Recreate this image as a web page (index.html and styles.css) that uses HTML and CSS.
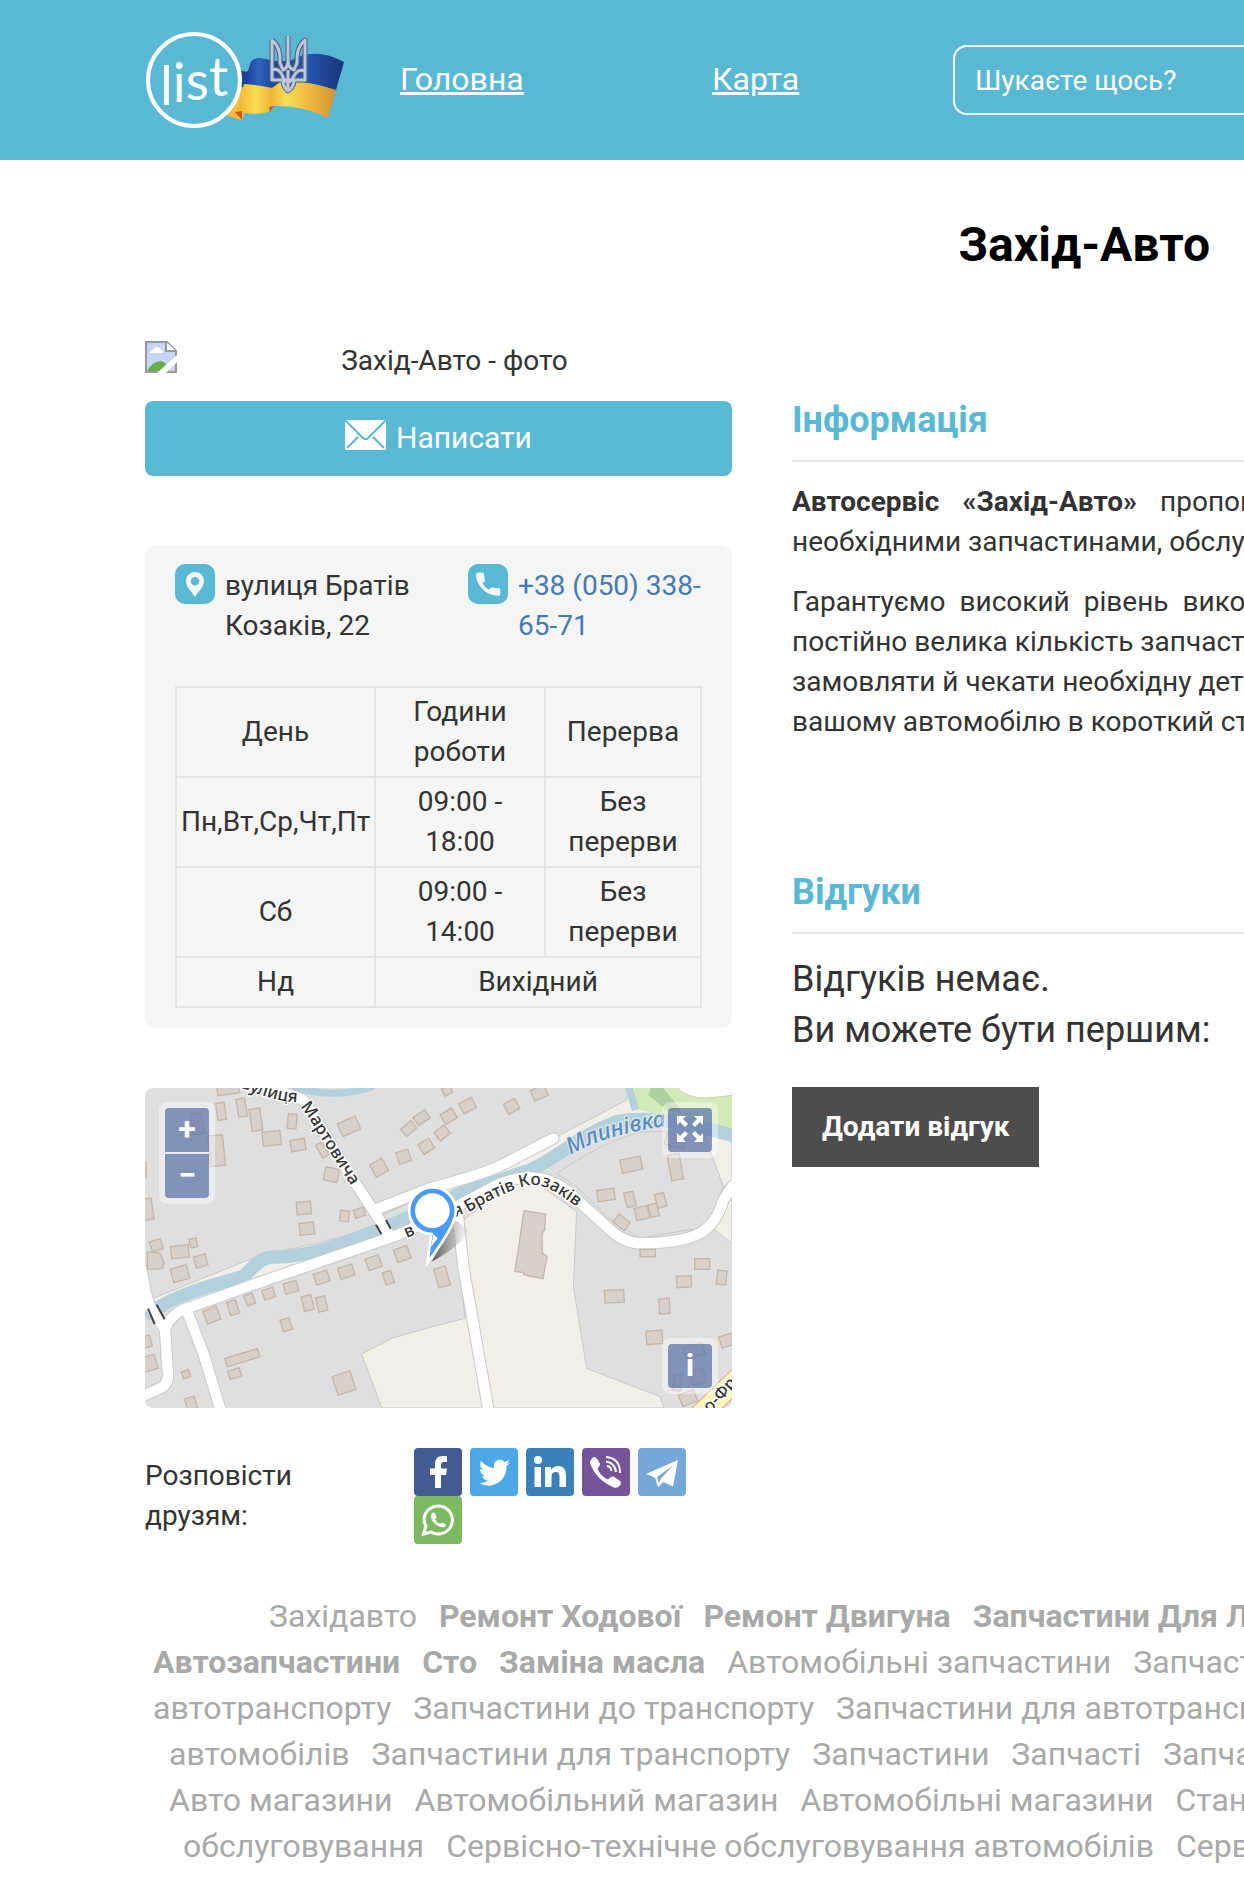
FILE: index.html
```html
<!DOCTYPE html>
<html lang="uk">
<head>
<meta charset="utf-8">
<meta name="viewport" content="width=device-width, initial-scale=1">
<title>Захід-Авто</title>
<link rel="stylesheet" href="styles.css">
</head>
<body>
<header class="header">
  <a class="logo" href="#" aria-label="list">
    <svg width="200" height="96" viewBox="0 0 200 96">
      <defs>
        <linearGradient id="blue" x1="0" x2="1"><stop offset="0" stop-color="#173f94"/><stop offset=".15" stop-color="#2f62bd"/><stop offset=".3" stop-color="#1b469c"/><stop offset=".6" stop-color="#2457b4"/><stop offset="1" stop-color="#1b3679"/></linearGradient>
        <linearGradient id="gold" x1="0" x2="1"><stop offset="0" stop-color="#f0b32c"/><stop offset=".2" stop-color="#fbdc52"/><stop offset=".35" stop-color="#eeb533"/><stop offset=".5" stop-color="#fade55"/><stop offset=".75" stop-color="#efb63c"/><stop offset="1" stop-color="#cf9233"/></linearGradient>
      </defs>
      <path fill="#f3bd38" d="M79 82L98 50 108 60 97 88Q90 87 79 82z"/>
      <path fill="#1d4291" d="M95 38Q101 41 105 38V56L96 55z"/>
      <path fill="url(#blue)" d="M105 32Q107 26 115 26 123 27 128 29H145Q170 14 199 30L191 58Q162 49 145 49L127 56Q113 53 99 53z"/>
      <path fill="url(#gold)" d="M99 52Q114 53 127 56L135 50Q161 48 191 58L183 86Q157 73 129 74 122 86 96 80L91 82z"/>
      <path fill="#d2531f" d="M90 80L97 79V88zM124 75L129 74 125 80z"/>
      <g fill="none" stroke-linejoin="round">
        <path stroke="#505e81" stroke-width="5" d="M127 8V48H160V8Q151 15 152 31L149 38Q143 36 143 29V4M127 8Q136 15 135 31L138 38Q143 36 143 29M127 38Q134 35 138 45 143 56 149 44 153 36 160 39M138 48Q138 55 143 59 149 55 149 48M143 38V59"/>
        <path stroke="#bcc7dc" stroke-width="3" d="M127 8V48H160V8Q151 15 152 31L149 38Q143 36 143 29V4M127 8Q136 15 135 31L138 38Q143 36 143 29M127 38Q134 35 138 45 143 56 149 44 153 36 160 39M138 48Q138 55 143 59 149 55 149 48M143 38V59"/>
      </g>
      <circle cx="49" cy="48" r="46" fill="#59b8d4" stroke="#fff" stroke-width="4"/>
      <text class="logo-text" x="15" y="73" dy="0 -3 -2 -4">list</text>
    </svg>
  </a>
  <nav class="nav"><a href="#">Головна</a><a href="#">Карта</a></nav>
  <input class="search" type="text" placeholder="Шукаєте щось?" aria-label="Пошук">
</header>

<main class="main">
  <h1 class="title">Захід-Авто</h1>
  <div class="columns">
    <div class="side">
      <div class="photo">
        <svg width="32" height="32" viewBox="0 0 32 32"><path fill="#c7d6f5" d="M1 1H22L31 10V31H1z"/><path fill="#fff" d="M5 12Q5 9 8 9 9 6 12 6 15 6 16 9 18 9 18 12z"/><path fill="#69ad46" d="M2 30Q8 20 16 20 22 21 24 30z"/><path fill="none" stroke="#999" stroke-width="2" d="M1 1H22L31 10V31H1z"/><path fill="#fff" stroke="#999" stroke-width="2" d="M21 1V10H31"/><path fill="#fff" d="M12 32L32 14V21L21 32z"/></svg>
        <span>Захід-Авто - фото</span>
      </div>
      <button class="write" type="button">
        <svg width="41" height="30" viewBox="0 0 41 30"><rect width="41" height="30" rx="2" fill="#fff"/><path d="M0 0L18 18Q20.500 20.500 23 18L41 0M2 28L13 17M39 28L28 17" fill="none" stroke="#59b8d4" stroke-width="2"/></svg>
        Написати
      </button>

      <section class="card">
        <div class="contacts">
          <div class="contact">
            <svg width="40" height="40" viewBox="0 0 40 40"><rect width="40" height="40" rx="10" fill="#59b8d4"/><path fill="#f5f5f5" fill-rule="evenodd" d="M20 8C15 8 11 12 11 17 11 23 17 28 20 33 23 28 29 23 29 17 29 12 25 8 20 8zM20 13A4 4 0 1 1 20 21.500 4 4 0 1 1 20 13z"/></svg>
            <span class="contact-text">вулиця Братів Козаків, 22</span>
          </div>
          <div class="contact">
            <svg width="40" height="40" viewBox="0 0 40 40"><rect width="40" height="40" rx="10" fill="#59b8d4"/><path fill="#f5f5f5" d="M10 8.500H14.500Q16 8.500 16 10 16 13 17 16 17.200 17 16.500 17.700L14.500 19.500Q17 23.500 20.800 25.800L23 23.700Q23.800 23 25 23.400 27.500 24.300 31 24.300 32.300 24.300 32.300 25.800V30Q32.300 31.800 30.500 31.800 20 31.500 14 24.500 8 18 8 10.500 8 8.500 10 8.500z"/></svg>
            <a class="contact-text" href="#">+38 (050) 338-65-71</a>
          </div>
        </div>
        <table class="hours">
          <colgroup><col class="col-day"><col class="col-time"><col></colgroup>
          <tr><th>День</th><th>Години роботи</th><th>Перерва</th></tr>
          <tr><td>Пн,Вт,Ср,Чт,Пт</td><td>09:00 - 18:00</td><td>Без перерви</td></tr>
          <tr><td>Сб</td><td>09:00 - 14:00</td><td>Без перерви</td></tr>
          <tr><td>Нд</td><td colspan="2">Вихідний</td></tr>
        </table>
      </section>

      <section class="map">
        <svg class="map-canvas" viewBox="15 24 1761 960" preserveAspectRatio="xMidYMid slice">
          <defs>
            <path id="st1" d="M300 22Q400 62 460 66 490 80 530 155L680 390"/>
            <path id="st2" d="M985 398Q1080 342 1150 320C1200 306 1230 316 1360 420"/>
            <path id="st3" d="M1292 224Q1400 160 1620 132"/>
            <path id="st4" d="M1710 1000L1830 870"/>
            <linearGradient id="shade"><stop offset="0" stop-color="#5c5650"/><stop offset="1" stop-color="#999" stop-opacity="0"/></linearGradient>
          </defs>
          <path fill="#dfdfdf" d="M15 24H1776V984H15z"/>
          <g fill="#f2efe9" stroke="#c9c9c9" stroke-width="3">
            <path d="M665 822L755 775 870 742 975 715 945 440 1150 280 1310 395 1300 620 1340 865 1560 950 1572 984H725z"/>
            <path d="M40 655Q200 590 350 530 540 490 720 440L790 450 850 420 550 540 140 680 50 700z"/>
            <path d="M728 405L800 370 900 350 1230 250 1460 145 1600 130 1690 170 1750 320 1776 310V24H1465L1460 60 1260 165z"/>
            <path d="M1718 445L1776 490V330z"/>
          </g>
          <path fill="#dfdfdf" stroke="#c9c9c9" stroke-width="3" d="M1250 280Q1380 190 1500 155H1690L1750 320 1700 440 1500 475 1400 410 1310 320z"/>
          <path fill="#d2eab5" d="M1470 24H1776V148L1490 88z"/>
          <path fill="#add19e" d="M1532 24H1570L1630 100 1580 90 1525 45z"/>
          <g fill="none" stroke="#b3d1dc">
            <path stroke-width="40" d="M15 705C120 640 200 620 310 590 370 530 370 530 440 530 570 515 700 455 800 415L960 340 1170 270C1270 225 1300 175 1430 125Q1560 100 1780 168"/>
            <path stroke-width="22" d="M460 18Q580 62 700 18M1466 20L1486 90"/>
          </g>
          <path fill="none" stroke="#c9c9c9" stroke-width="37" stroke-linecap="round" stroke-linejoin="round" d="M75 745Q95 700 140 685L350 610 540 545 760 470 850 430 950 380 1070 315Q1200 260 1290 340L1400 440Q1450 490 1500 490 1620 490 1680 460 1730 430 1750 360L1780 315M715 385L870 325Q1020 285 1080 258L1240 175M320 8Q450 40 490 60L640 300 745 460M5 570Q15 640 30 680L75 750 82 860Q90 900 70 920L5 950M140 690L190 820 245 1000M953 400L970 560 1047 1000"/>
          <path fill="none" stroke="#fff" stroke-width="31" stroke-linecap="round" stroke-linejoin="round" d="M75 745Q95 700 140 685L350 610 540 545 760 470 850 430 950 380 1070 315Q1200 260 1290 340L1400 440Q1450 490 1500 490 1620 490 1680 460 1730 430 1750 360L1780 315M715 385L870 325Q1020 285 1080 258L1240 175M320 8Q450 40 490 60L640 300 745 460M5 570Q15 640 30 680L75 750 82 860Q90 900 70 920L5 950M140 690L190 820 245 1000M953 400L970 560 1047 1000"/>
          <path fill="#fff" stroke="#c9c9c9" stroke-width="3" d="M1610 22Q1640 55 1700 54L1780 46V22z"/>
          <path stroke="#444" stroke-width="6" d="M24 686L44 732M50 674L74 718M708 434L724 462M738 420L752 446"/>
          <path stroke="#e8a08c" stroke-width="66" d="M1660 1024L1810 880"/>
          <path stroke="#f7f7ba" stroke-width="60" d="M1660 1024L1810 880"/>
          <g fill="#d9d0c9" stroke="#c6b6a9" stroke-width="4">
            <path d="M1152 392L1217 402 1214 450 1206 460 1207 520 1221 530 1209 596 1151 584 1152 578 1125 574z"/>
            <path d="M22 515L60 520 72 548 68 566 22 568z"/>
            <rect x="232" y="15" width="66" height="28" transform="rotate(-8 265 30)"/>
            <rect x="155" y="100" width="34" height="62" transform="rotate(-8 172 131)"/>
            <rect x="208" y="166" width="44" height="92" transform="rotate(-6 230 212)"/>
            <rect x="230" y="68" width="26" height="52" transform="rotate(-8 243 94)"/>
            <rect x="292" y="56" width="26" height="54" transform="rotate(-10 305 83)"/>
            <rect x="332" y="86" width="32" height="66" transform="rotate(-8 348 119)"/>
            <rect x="368" y="154" width="54" height="42" transform="rotate(-6 395 175)"/>
            <rect x="443" y="102" width="27" height="44" transform="rotate(6 456 124)"/>
            <rect x="452" y="178" width="44" height="34" transform="rotate(-10 474 195)"/>
            <rect x="598" y="118" width="58" height="42" transform="rotate(-24 627 139)"/>
            <rect x="553" y="264" width="42" height="40" transform="rotate(12 574 284)"/>
            <rect x="536" y="188" width="22" height="44" transform="rotate(-30 547 210)"/>
            <rect x="470" y="365" width="43" height="38" transform="rotate(-5 491 384)"/>
            <rect x="479" y="428" width="43" height="36" transform="rotate(-7 501 446)"/>
            <rect x="600" y="392" width="27" height="32" transform="rotate(7 613 408)"/>
            <rect x="643" y="386" width="31" height="25" transform="rotate(-18 658 398)"/>
            <rect x="696" y="242" width="42" height="42" transform="rotate(-30 717 263)"/>
            <rect x="772" y="212" width="38" height="36" transform="rotate(-18 791 230)"/>
            <rect x="786" y="132" width="40" height="28" transform="rotate(-40 806 146)"/>
            <rect x="824" y="98" width="42" height="30" transform="rotate(-35 845 113)"/>
            <rect x="840" y="182" width="38" height="34" transform="rotate(-32 859 199)"/>
            <rect x="888" y="144" width="38" height="32" transform="rotate(-38 905 160)"/>
            <rect x="906" y="92" width="40" height="34" transform="rotate(-32 926 109)"/>
            <rect x="962" y="60" width="42" height="34" transform="rotate(-28 983 77)"/>
            <rect x="908" y="20" width="26" height="24" transform="rotate(-28 921 32)"/>
            <rect x="1096" y="62" width="38" height="34" transform="rotate(-28 1115 79)"/>
            <rect x="1176" y="22" width="44" height="34" transform="rotate(-24 1198 39)"/>
            <rect x="1443" y="234" width="62" height="40" transform="rotate(-12 1474 254)"/>
            <rect x="1588" y="222" width="36" height="78" transform="rotate(-10 1606 261)"/>
            <rect x="1372" y="328" width="52" height="34" transform="rotate(-8 1398 345)"/>
            <rect x="1456" y="336" width="28" height="44" transform="rotate(-14 1470 358)"/>
            <rect x="1548" y="340" width="28" height="42" transform="rotate(-16 1562 360)"/>
            <rect x="1486" y="380" width="40" height="38" transform="rotate(-14 1506 399)"/>
            <rect x="1528" y="372" width="26" height="38" transform="rotate(-14 1541 391)"/>
            <rect x="1424" y="412" width="42" height="30" transform="rotate(38 1445 427)"/>
            <rect x="1500" y="508" width="46" height="22"/>
            <rect x="1664" y="536" width="45" height="32"/>
            <rect x="1610" y="588" width="44" height="34" transform="rotate(-3 1632 605)"/>
            <rect x="1731" y="572" width="28" height="42" transform="rotate(6 1745 593)"/>
            <rect x="1394" y="630" width="58" height="38" transform="rotate(-3 1423 649)"/>
            <rect x="1557" y="656" width="32" height="45" transform="rotate(-4 1573 678)"/>
            <rect x="1519" y="752" width="48" height="40" transform="rotate(-5 1543 772)"/>
            <rect x="1740" y="764" width="44" height="34" transform="rotate(-18 1762 781)"/>
            <rect x="1634" y="794" width="58" height="36" transform="rotate(-16 1663 812)"/>
            <rect x="1600" y="884" width="24" height="48" transform="rotate(8 1612 908)"/>
            <rect x="1654" y="870" width="40" height="42" transform="rotate(-14 1674 891)"/>
            <rect x="1620" y="936" width="48" height="36" transform="rotate(-22 1644 954)"/>
            <rect x="1576" y="166" width="60" height="34" transform="rotate(14 1606 183)"/>
            <rect x="888" y="562" width="36" height="58" transform="rotate(-16 906 590)"/>
            <rect x="766" y="502" width="42" height="40" transform="rotate(-20 787 522)"/>
            <rect x="680" y="530" width="42" height="36" transform="rotate(-20 701 548)"/>
            <rect x="597" y="558" width="44" height="34" transform="rotate(-18 619 575)"/>
            <rect x="524" y="576" width="42" height="34" transform="rotate(-18 545 593)"/>
            <rect x="433" y="606" width="40" height="32" transform="rotate(-16 453 622)"/>
            <rect x="369" y="626" width="34" height="30" transform="rotate(-18 386 641)"/>
            <rect x="316" y="642" width="26" height="32" transform="rotate(-20 329 658)"/>
            <rect x="265" y="662" width="28" height="42" transform="rotate(-18 279 683)"/>
            <rect x="194" y="684" width="43" height="42" transform="rotate(-22 216 705)"/>
            <rect x="488" y="647" width="30" height="44" transform="rotate(-14 503 669)"/>
            <rect x="531" y="650" width="28" height="44" transform="rotate(-14 545 672)"/>
            <rect x="425" y="716" width="28" height="36" transform="rotate(-18 439 734)"/>
            <rect x="732" y="574" width="26" height="38" transform="rotate(-18 745 593)"/>
            <rect x="256" y="820" width="102" height="26" transform="rotate(-17 307 833)"/>
            <rect x="266" y="868" width="36" height="26" transform="rotate(-18 284 881)"/>
            <rect x="584" y="880" width="56" height="58" transform="rotate(-18 612 909)"/>
            <rect x="127" y="872" width="22" height="22" transform="rotate(-18 138 883)"/>
            <rect x="138" y="952" width="30" height="36" transform="rotate(-18 153 970)"/>
            <rect x="5" y="828" width="44" height="44" transform="rotate(-16 27 850)"/>
            <rect x="5" y="768" width="28" height="34" transform="rotate(-16 19 785)"/>
            <rect x="4" y="356" width="34" height="64" transform="rotate(-8 21 388)"/>
            <rect x="4" y="246" width="14" height="46"/>
            <rect x="32" y="480" width="34" height="32" transform="rotate(-18 49 496)"/>
            <rect x="93" y="497" width="53" height="37" transform="rotate(-6 119 515)"/>
            <rect x="95" y="560" width="50" height="42" transform="rotate(-16 120 581)"/>
            <rect x="149" y="476" width="22" height="26" transform="rotate(-12 160 489)"/>
            <rect x="164" y="526" width="36" height="34" transform="rotate(-16 182 543)"/>
          </g>
          <g class="street">
            <text><textPath href="#st1">вулиця Мартовича</textPath></text>
            <text><textPath href="#st2">Братів Козаків</textPath></text>
            <text><textPath href="#st4">о-Фр</textPath></text>
            <text x="800" y="474" transform="rotate(-24 800 474)">в</text>
            <text x="946" y="412" transform="rotate(-24 946 412)">я</text>
          </g>
          <text class="river"><textPath href="#st3">Млинівка</textPath></text>
          <path fill="url(#shade)" d="M875 545Q900 500 945 420L990 450Q960 500 875 545z"/>
          <path fill="#4a9af8" stroke="#fff" stroke-width="8" d="M862 548L874 462A70 70 0 1 1 945 410Q930 460 862 548z"/>
          <path fill="#fff" d="M893 475L873 500 880 462z"/>
          <circle cx="877" cy="392" r="52" fill="#fff"/>
        </svg>
        <div class="control control-zoom"><button type="button" aria-label="Збільшити">+</button><button type="button" aria-label="Зменшити">−</button></div>
        <div class="control control-full"><button type="button" aria-label="На весь екран"><svg width="28" height="28" viewBox="0 0 28 28"><path fill="#fff" d="M1 1H10L7 4 12 9 9 12 4 7 1 10zM27 1V10L24 7 19 12 16 9 21 4 18 1zM1 27V18L4 21 9 16 12 19 7 24 10 27zM27 27H18L21 24 16 19 19 16 24 21 27 18z"/></svg></button></div>
        <div class="control control-info"><button type="button" aria-label="Інформація про карту">i</button></div>
      </section>

      <section class="share">
        <p class="share-label">Розповісти друзям:</p>
        <div class="share-links">
          <a class="facebook" href="#" aria-label="Facebook"><svg viewBox="0 0 48 48"><path fill="#fff" d="M21 40V27H16V20.500H21V16Q21 8 28.500 8H33V14H30Q27 14 27 17V20.500H33L32 27H27V40z"/></svg></a>
          <a class="twitter" href="#" aria-label="Twitter"><svg viewBox="0 0 48 48"><path fill="#fff" d="M40 14.500Q38.500 16.500 36.500 18 37 27 30 33.500 20 41 9 35 14 35.500 18 32.500 13.500 32 12 28 13.500 28.300 15 28 10 26 10 21 11.500 22 13 22 8.500 18 11 13 17 19.500 24 20 23 14 28 12 32 11 34.500 14 37 13.500 39 12 38.500 14.500 36.500 16 38 15.500 40 14.500z"/></svg></a>
          <a class="linkedin" href="#" aria-label="LinkedIn"><svg viewBox="0 0 48 48"><path fill="#fff" d="M8.500 19H15V39H8.500zM19 19H25V22Q27.500 18 32 18 40 18 40 27V39H33.500V28.500Q33.500 24 30 24 25.500 24 25.500 29V39H19z"/><circle cx="12" cy="12" r="4" fill="#fff"/></svg></a>
          <a class="viber" href="#" aria-label="Viber"><svg viewBox="0 0 48 48"><path fill="#fff" d="M9 12Q10 9 13 9 16 11 18 16 18 18 15.500 20.500 18 28 26 31.500L29 29Q31 28 33 29.500L38 33Q40 35 38 37.500 35 40.500 32 39.500 14 32 8 15 7.500 13.500 9 12z"/><path fill="none" stroke="#fff" stroke-width="2" d="M24 9Q38 10 38 25M24 13.500Q33 15 34 24M25 18Q29 18.500 29.500 23"/></svg></a>
          <a class="telegram" href="#" aria-label="Telegram"><svg viewBox="0 0 48 48"><path fill="#fff" d="M8 26L40 12 35 38.500 25.500 34 20 39 17 29.500zM19 29L21 35 23 30.500 35 17.500z" fill-rule="evenodd"/></svg></a>
          <a class="whatsapp" href="#" aria-label="WhatsApp"><svg viewBox="0 0 48 48"><path fill="none" stroke="#fff" stroke-width="3" d="M9.500 38L12 30Q10 27 10 23.500A14.200 14 0 1 1 17 36z"/><path fill="#fff" d="M18 17Q20 16 21 17.500L22.500 21Q22 22 21 23.500 23 26.500 26 28L28 26.500 32 28.500Q32 31 28.500 31.500 24 31 20.500 27.500 15 22 18 17z"/></svg></a>
        </div>
      </section>
    </div>

    <div class="content">
      <section class="info">
        <h2 class="heading">Інформація</h2>
        <div class="info-text">
          <p><span class="line spread-wide"><b>Автосервіс</b><b>«Захід-Авто»</b><span>пропонує</span></span><span class="line">необхідними запчастинами, обслуговуванням</span></p>
          <p><span class="line spread"><span>Гарантуємо</span><span>високий</span><span>рівень</span><span>виконання</span></span><span class="line">постійно велика кількість запчастин</span><span class="line">замовляти й чекати необхідну деталь</span><span class="line">вашому автомобілю в короткий строк</span></p>
        </div>
      </section>
      <section class="reviews">
        <h2 class="heading">Відгуки</h2>
        <p class="reviews-text">Відгуків немає.<br>Ви можете бути першим:</p>
        <button class="add" type="button">Додати відгук</button>
      </section>
    </div>
  </div>

  <div class="tags">
    <div class="tag-row indent-large"><span>Західавто</span><b>Ремонт Ходової</b><b>Ремонт Двигуна</b><b>Запчастини Для Легкових</b></div>
    <div class="tag-row"><b>Автозапчастини</b><b>Сто</b><b>Заміна масла</b><span>Автомобільні запчастини</span><span>Запчастини до</span></div>
    <div class="tag-row"><span>автотранспорту</span><span>Запчастини до транспорту</span><span>Запчастини для автотранспорту</span></div>
    <div class="tag-row indent-small"><span>автомобілів</span><span>Запчастини для транспорту</span><span>Запчастини</span><span>Запчасті</span><span>Запчастина</span></div>
    <div class="tag-row indent-small"><span>Авто магазини</span><span>Автомобільний магазин</span><span>Автомобільні магазини</span><span>Станції</span></div>
    <div class="tag-row indent-medium"><span>обслуговування</span><span>Сервісно-технічне обслуговування автомобілів</span><span>Сервісне</span></div>
  </div>
</main>
</body>
</html>
```
FILE: styles.css
```css
* { box-sizing: border-box; }
body { margin: 0; background: #fff; color: #333; font-family: Roboto, "Liberation Sans", sans-serif; font-size: 28px; line-height: 40px; overflow-x: hidden; }
svg { display: block; flex: none; }
p, h1, h2 { margin: 0; }
button { border: 0; padding: 0; font-family: inherit; cursor: pointer; }

.header { display: flex; align-items: center; height: 160px; padding-left: 145px; background: #59b8d4; }
.logo { margin-right: 55px; }
.logo-text { font-family: Lato, sans-serif; font-weight: 400; font-size: 54px; fill: #fff; }
.nav { display: grid; grid-template-columns: 312px 241px; padding-bottom: 2px; }
.nav a { color: #fff; font-size: 32px; }
.search { flex: 1; min-width: 0; height: 70px; padding: 0 20px; border: 2px solid #fff; border-right: 0; border-radius: 14px 0 0 14px; background: transparent; color: #fff; font: inherit; }
.search::placeholder { color: #fff; opacity: 1; }

.title { padding: 55px 34px 65px 0; font-size: 48px; line-height: 60px; text-align: right; color: #000; }
.columns { display: flex; gap: 60px; padding-left: 145px; }
.side { flex: 0 0 587px; padding-top: 1px; }
.content { flex: 1; min-width: 0; padding-top: 60px; }

.photo { display: flex; height: 40px; }
.photo span { flex: 1; text-align: center; }
.write { display: flex; align-items: center; justify-content: center; gap: 10px; width: 100%; height: 75px; margin-top: 20px; padding-bottom: 2px; border-radius: 8px; background: #59b8d4; color: #fff; font-size: 30px; }
.write svg { margin-bottom: 5px; }

.card { margin-top: 70px; padding: 18px 30px 20px; border-radius: 10px; background: #f5f5f5; }
.contacts { display: grid; grid-template-columns: 293px 1fr; }
.contact { display: flex; gap: 10px; }
.contact-text { padding-top: 2px; }
a.contact-text { color: #437ab8; text-decoration: none; }
.hours { width: 100%; margin-top: 40px; border-collapse: collapse; table-layout: fixed; text-align: center; }
.hours th, .hours td { padding: 4px; border: 2px solid #e5e5e5; font-weight: 400; }
.col-day { width: 199px; }
.col-time { width: 170px; }

.map { position: relative; height: 320px; margin-top: 60px; border-radius: 8px; overflow: hidden; }
.map-canvas { width: 100%; height: 100%; }
.street text, .river { font-family: "Noto Sans", sans-serif; font-size: 51px; font-weight: 500; fill: #333; stroke: #fff; stroke-width: 8px; paint-order: stroke; }
.river { font-size: 68px; font-style: italic; fill: #5b8ac0; stroke: #dce8ea; }
.control { position: absolute; display: grid; gap: 2px; padding: 6px; border-radius: 8px; background: rgba(255, 255, 255, .4); }
.control button { display: flex; align-items: center; justify-content: center; width: 44px; height: 44px; padding-bottom: 2px; border-radius: 4px; background: rgba(32, 66, 140, .52); color: #fff; font-size: 32px; font-weight: 700; line-height: 44px; }
.control-zoom { top: 14px; left: 14px; }
.control-zoom button:first-child { border-radius: 4px 4px 0 0; }
.control-zoom button:last-child { border-radius: 0 0 4px 4px; }
.control-full { top: 14px; right: 14px; }
.control-info { right: 14px; bottom: 14px; }

.share { display: flex; margin-top: 40px; }
.share-label { flex: 0 0 269px; padding: 8px 90px 0 0; }
.share-links { display: flex; flex-wrap: wrap; column-gap: 8px; }
.share-links a { width: 48px; height: 48px; border-radius: 4px; }
.facebook { background: #435a93; }
.twitter { background: #4ca9e7; }
.linkedin { background: #3a80ba; }
.viber { background: #765499; }
.telegram { background: #75a7d9; }
.whatsapp { background: #7cba61; }

.heading { padding-bottom: 20px; border-bottom: 2px solid #e5e5e5; color: #59b8d4; font-size: 36px; line-height: 40px; }
.info-text { max-height: 250px; margin-top: 20px; overflow: hidden; }
.info-text p { margin-bottom: 20px; }
.line { display: block; white-space: nowrap; }
.spread { display: flex; gap: 14px; }
.spread-wide { display: flex; gap: 23px; }
.reviews { margin-top: 140px; }
.reviews-text { margin-top: 20px; font-size: 36px; line-height: 51px; }
.add { height: 80px; margin-top: 31px; padding: 0 29px 2px 30px; background: #4d4d4d; color: #fff; font-size: 28px; font-weight: 700; }

.tags { padding: 49px 0 8px 153px; overflow: hidden; color: #a9a9a9; font-size: 32px; line-height: 46px; }
.tag-row { display: flex; gap: 22px; white-space: nowrap; }
.indent-small { padding-left: 16px; }
.indent-medium { padding-left: 30px; }
.indent-large { padding-left: 116px; }
```
